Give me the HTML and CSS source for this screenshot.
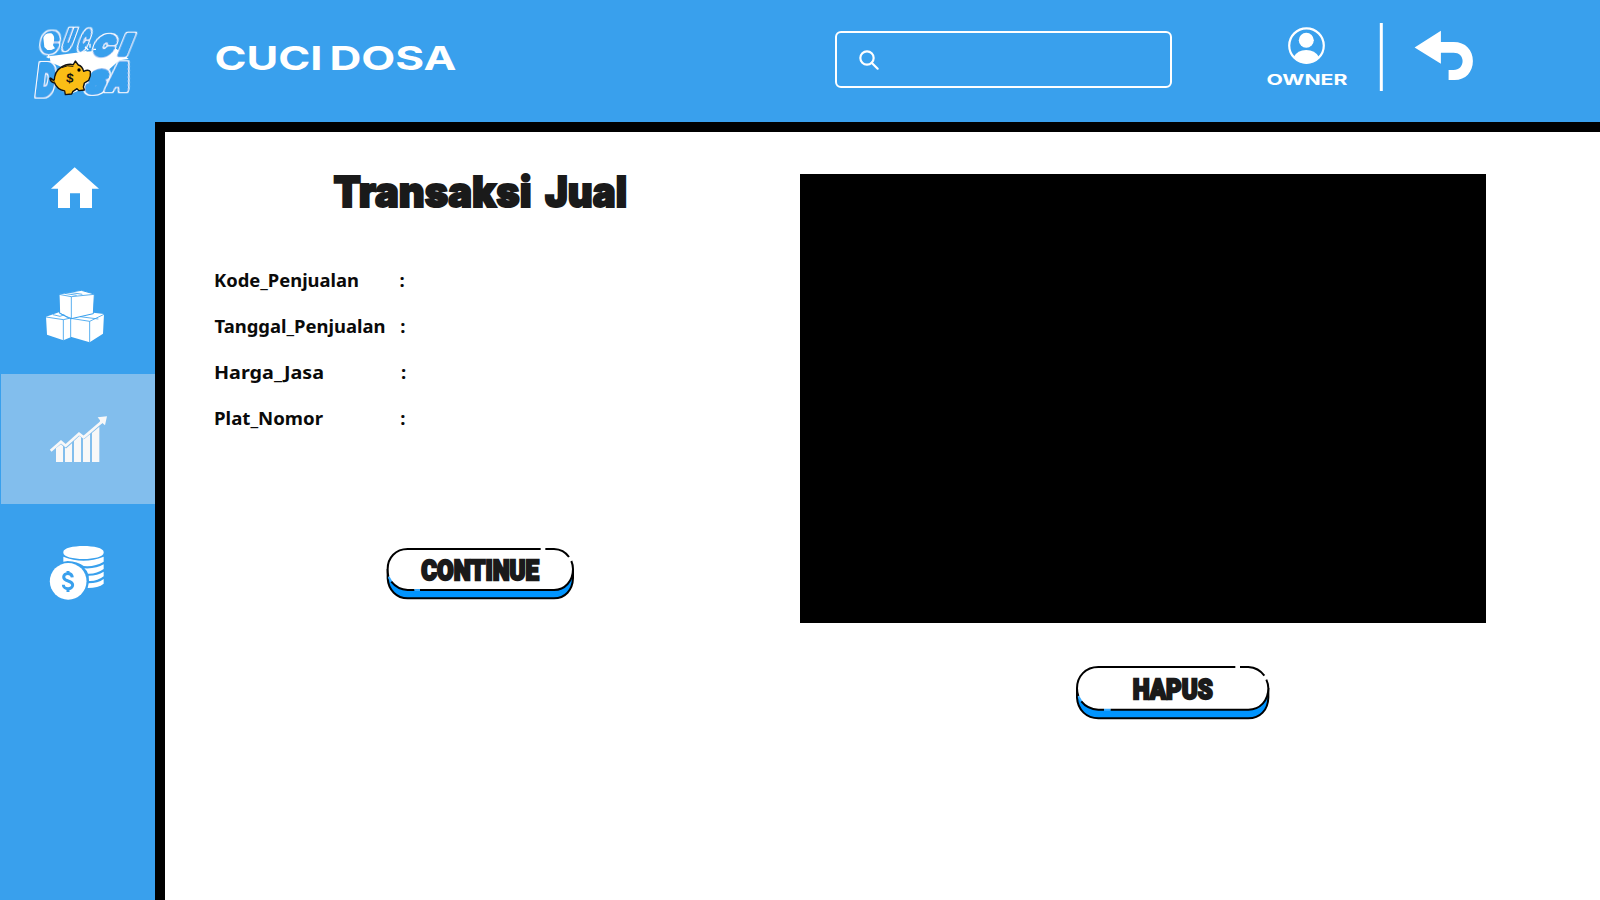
FILE: index.html
```html
<!DOCTYPE html>
<html lang="id">
<head>
<meta charset="utf-8">
<title>Cuci Dosa</title>
<link rel="stylesheet" href="styles.css">
</head>
<body>
<div class="app">
  <header class="header">
    <svg class="logo" viewBox="0 0 390 285">
      <defs>
        <filter id="outline" x="-30%" y="-30%" width="160%" height="160%">
          <feMorphology in="SourceAlpha" operator="dilate" radius="3.4" result="grown"/>
          <feFlood flood-color="#fff"/>
          <feComposite in2="grown" operator="in" result="rim"/>
          <feMerge><feMergeNode in="rim"/><feMergeNode in="SourceGraphic"/></feMerge>
        </filter>
      </defs>
      <path class="white" d="M88 124L180 112L290 102L326 132L298 136L262 168L236 188L206 182L170 146L130 158L92 142Z"/>
      <g class="bubble">
        <text transform="translate(60 112) skewX(-8)" textLength="52" lengthAdjust="spacingAndGlyphs">C</text>
        <text transform="translate(124 103) skewX(-20)" textLength="26" lengthAdjust="spacingAndGlyphs">U</text>
        <text transform="translate(170 105) skewX(-20)" textLength="26" lengthAdjust="spacingAndGlyphs">C</text>
        <text transform="translate(214 122) skewX(-20)" textLength="60" lengthAdjust="spacingAndGlyphs">C</text>
        <text transform="translate(294 120) skewX(-22)" textLength="26" lengthAdjust="spacingAndGlyphs">I</text>
        <text class="tall" transform="translate(46 242) skewX(-7)" textLength="54" lengthAdjust="spacingAndGlyphs">D</text>
        <text transform="translate(120 225)" textLength="60" lengthAdjust="spacingAndGlyphs">O</text>
        <text class="mid" transform="translate(192 234) skewX(-18)" textLength="58" lengthAdjust="spacingAndGlyphs">S</text>
        <text class="high" transform="translate(256 226) skewX(-14)" textLength="66" lengthAdjust="spacingAndGlyphs">A</text>
      </g>
      <path class="white" d="M70 68Q76 52 94 55Q105 62 102 78L99 91L105 100L94 105L82 105L73 96Z"/>
      <path class="splash" d="M80 126H105M86 120V130M195 95L205 105M210 86V98M220 103H228M190 112L200 108"/>
      <path class="pig" d="M103 197L91 188M104 186Q108 160 137 150Q150 146 160 149L166 138L175 150Q187 153 191 169Q206 162 211 170Q213 184 206 196L193 204L190 216L193 225L177 227L171 221L158 230L155 237L136 239L134 228Q111 223 104 204Q91 201 90 190Q98 197 103 194Z"/>
      <path class="pig-line" d="M125 158Q142 149 160 154M91 188L103 200"/>
      <circle cx="177" cy="165" r="5"/>
      <text class="pig-coin" x="139" y="203" transform="rotate(6 150 188)">$</text>
    </svg>
    <svg class="brand" viewBox="0 0 260 60"><text y="40"><tspan x="14.500" textLength="108" lengthAdjust="spacingAndGlyphs">CUCI</tspan><tspan x="129.500" textLength="127" lengthAdjust="spacingAndGlyphs">DOSA</tspan></text></svg>
    <div class="search">
      <svg viewBox="0 0 60 60"><circle cx="24" cy="24" r="20"/><path d="M38 38L56 56"/></svg>
    </div>
    <svg class="account" viewBox="0 0 240 112">
      <circle class="ring" cx="19.500" cy="35.600" r="17.300"/>
      <circle class="white" cx="19.300" cy="30.300" r="7.500"/>
      <path class="white" d="M6.700 47Q10.500 40 19.200 40Q28 40 32 47Q26.500 53.500 19.200 53.500Q11.500 53.500 6.700 47Z"/>
      <text x="-20.500" y="74.700" textLength="81" lengthAdjust="spacingAndGlyphs">OWNER</text>
      <path class="white" d="M92.800 13H95.800V81H92.800Z"/>
      <path class="white" transform="translate(.6 0)" d="M127 37.500L153.300 20.700V32H166C178 32 185.300 40 185.300 51C185.300 62 178 70 167 70H161V60H166C171.500 60 175 56 175 51C175 46 171.500 42.700 166 42.700H153.300V53.700Z"/>
    </svg>
  </header>

  <nav class="sidebar">
    <a class="nav-item">
      <svg viewBox="-90 -84 465 378"><path class="white" d="M134 52L207 116H186V174H150V130H120V174H84V116H63Z"/></svg>
    </a>
    <a class="nav-item">
      <svg viewBox="-90 294 465 378">
        <path class="white" d="M48 500L89 486L122 504V562L100 571L51 554ZM122 505L190 488L222 492L219 551L179 577L122 560Z"/>
        <path class="white seam" d="M87 432L154 421L193 432L190 491L124 506L89 490Z"/>
        <path class="seam line" d="M87 433L124 440L193 433M124 440V505M104 430L140 436M118 427L157 433M48 501L100 509L122 504M100 509V571M122 504V562M122 505L179 514L222 493M179 514V577M69 494L90 499L103 494M88 488L116 505M150 500L205 507"/>
      </svg>
    </a>
    <a class="nav-item active">
      <svg viewBox="0 27 465 390">
        <path class="soft" d="M168 249L183 238L189 244V291H168ZM195 249L199 250L216 235V291H195ZM222 228L238 213L243 217V291H222ZM249 223L253 222L270 208V291H249ZM276 204L298 185V291H276Z"/>
        <path class="trend" d="M152 257L183 230L197 242L237 206L251 217L308 168"/>
        <path class="soft" d="M293 157L321 154L315 181L307 174L299 179L300 166Z"/>
      </svg>
    </a>
    <a class="nav-item">
      <svg viewBox="0 417 465 378">
        <path class="white" d="M190 561C190 537 311 537 311 561V563C311 588 190 588 190 563ZM190 575Q250 599 311 575V590Q285 606 251 603Q233 589 203 588L190 590ZM253 610Q289 612 311 598V612Q290 627 264 626Q261 617 253 610ZM266 632Q293 632 311 620V634Q292 649 267 648ZM266 655Q294 655 311 642V656Q295 669 263 669Z"/>
        <circle class="white" cx="204.500" cy="649" r="55"/>
        <path class="dollar" d="M217 637C215 620 191 623 191 636C191 652 218 644 218 660C218 675 190 675 190 659M204 618V628M204 670V681"/>
      </svg>
    </a>
  </nav>

  <main class="main">
    <section class="form">
      <svg class="heading" viewBox="320 160 320 60"><text y="207"><tspan x="333.500" textLength="198" lengthAdjust="spacingAndGlyphs">Transaksi</tspan><tspan x="545" textLength="82" lengthAdjust="spacingAndGlyphs">Jual</tspan></text></svg>
      <div class="fields">
        <div class="field"><svg viewBox="0 0 230 46"><text x="14" y="32" textLength="145" lengthAdjust="spacingAndGlyphs">Kode_Penjualan</text><text x="199.500" y="32">:</text></svg></div>
        <div class="field"><svg viewBox="0 0 230 46"><text x="14.500" y="32" textLength="171" lengthAdjust="spacingAndGlyphs">Tanggal_Penjualan</text><text x="200.300" y="32">:</text></svg></div>
        <div class="field"><svg viewBox="0 0 230 46"><text x="14" y="32" textLength="110" lengthAdjust="spacingAndGlyphs">Harga_Jasa</text><text x="201" y="32">:</text></svg></div>
        <div class="field"><svg viewBox="0 0 230 46"><text x="14" y="32" textLength="109" lengthAdjust="spacingAndGlyphs">Plat_Nomor</text><text x="200.300" y="32">:</text></svg></div>
      </div>
      <svg class="button continue" viewBox="0 0 630 225">
        <path class="base" d="M38 105V130C40 165 65 190 98 190H537C570 190 593 165 594 130V105Z"/>
        <path class="face" d="M98 42H537C572 42 594 68 594 102C594 138 570 165 537 165H98C62 165 38 138 38 102C38 68 62 42 98 42Z"/>
        <path class="blue-edge" d="M41 126L50 142M118 165H135"/>
        <path class="edge" d="M40 124Q38 114 38 102C38 68 62 42 98 42H497M511 42H537Q566 43 582 66M589 78Q594 90 594 102C594 138 570 165 537 165H135M118 165H98Q68 164 49 140"/>
        <text x="139" y="136" textLength="353" lengthAdjust="spacingAndGlyphs">CONTINUE</text>
      </svg>
    </section>
    <section class="result">
      <div class="table-area"></div>
      <svg class="button hapus" viewBox="0 0 645 225">
        <path class="base" d="M36 102V128C38 165 65 190 100 190H550C585 190 609 165 610 128V102Z"/>
        <path class="face" d="M100 36H550C587 36 610 64 610 100C610 137 585 164 550 164H100C62 164 36 137 36 100C36 64 62 36 100 36Z"/>
        <path class="blue-edge" d="M40 124L50 141M117 164H137"/>
        <path class="edge" d="M40 123Q36 112 36 100C36 64 62 36 100 36H511M525 36H550Q581 38 598 62M604 74Q610 87 610 100C610 137 585 164 550 164H137M117 164H100Q67 162 49 139"/>
        <text x="203" y="133" textLength="240" lengthAdjust="spacingAndGlyphs">HAPUS</text>
      </svg>
    </section>
  </main>
</div>
</body>
</html>
```
FILE: styles.css
```css
* { box-sizing: border-box; }
body { margin: 0; background: #fff; font-family: Inter, "Liberation Sans", sans-serif; }
svg { display: block; flex: none; overflow: visible; }
.app {
  width: 1600px;
  height: 900px;
  display: grid;
  grid-template: 122px 778px / 154.667px 1fr;
  overflow: hidden;
  background: #39a0ed;
}
.white { fill: #fff; }

.header { grid-column: 1 / 3; display: flex; align-items: flex-start; }
.logo { width: 130px; height: 95px; margin: 15px 0 0 20px; }
.bubble text {
  font: 900 82px Inter, sans-serif;
  fill: #39a0ed;
  stroke: #39a0ed;
  stroke-width: 12;
  stroke-linejoin: round;
  filter: url(#outline);
}
.bubble .tall { font-size: 130px; }
.bubble .mid { font-size: 92px; }
.bubble .high { font-size: 112px; }
.splash { fill: none; stroke: #fff; stroke-width: 4; }
.pig { fill: #fbbd16; stroke: #111; stroke-width: 4; stroke-linejoin: round; }
.pig-line { fill: none; stroke: #111; stroke-width: 3; }
.pig-coin { font: 700 40px "Liberation Sans", sans-serif; fill: #111; }
.brand { width: 260px; height: 60px; margin: 30px 0 0 50px; }
.brand text { font-size: 33px; font-weight: 700; fill: #fff; }
.search {
  width: 337.500px;
  height: 57px;
  margin: 31px 0 0 374.500px;
  padding: 17px 0 0 22px;
  border: 2px solid #fff;
  border-radius: 6px;
}
.search svg { width: 20px; height: 20px; fill: none; stroke: #fff; stroke-width: 6.500; stroke-linecap: round; }
.account { width: 240px; height: 112px; margin: 10px 0 0 114.500px; }
.account .ring { fill: none; stroke: #fff; stroke-width: 2.200; }
.account text { font-size: 15px; font-weight: 700; fill: #fff; }

.sidebar { display: flex; flex-direction: column; }
.nav-item { height: 126px; }
.nav-item svg { width: 155px; height: 100%; }
.nav-item.active { height: 130px; margin-left: 1px; background: #82beed; }
.nav-item.active svg { margin-left: -1px; }
.seam { stroke: #39a0ed; stroke-width: 3; }
.line { fill: none; stroke-width: 2.500; }
.soft { fill: #f8f8f8; }
.trend { fill: none; stroke: #f8f8f8; stroke-width: 8; }
.dollar { fill: none; stroke: #39a0ed; stroke-width: 9; }

.main { display: flex; background: #fff; border: solid #000; border-width: 10px 0 0 10px; }
.form { width: 635.333px; padding-top: 28px; }
.heading { width: 320px; height: 60px; margin-left: 155.333px; }
.heading text { font-size: 42px; font-weight: 900; fill: #1a1a1a; stroke: #1a1a1a; stroke-width: 2; }
.fields { margin: 35px 0 0 35.333px; }
.field svg { width: 230px; height: 46px; }
.field text { font: 700 18.500px "Noto Sans", sans-serif; fill: #0a0a0a; }
.button text { font: 900 85px Roboto, sans-serif; fill: #1a1a1a; stroke: #1a1a1a; stroke-width: 7; }
.base { fill: #0094ff; stroke: #000; stroke-width: 6; }
.face { fill: #fff; }
.edge { fill: none; stroke: #000; stroke-width: 6; }
.blue-edge { fill: none; stroke: #38aaff; stroke-width: 6; }
.continue { width: 210px; height: 75px; margin: 96px 0 0 210.333px; }
.result { padding-top: 41.500px; }
.table-area { width: 686px; height: 449.500px; background: #000; }
.hapus { width: 215px; height: 75px; margin: 32px 0 0 265px; }
```
